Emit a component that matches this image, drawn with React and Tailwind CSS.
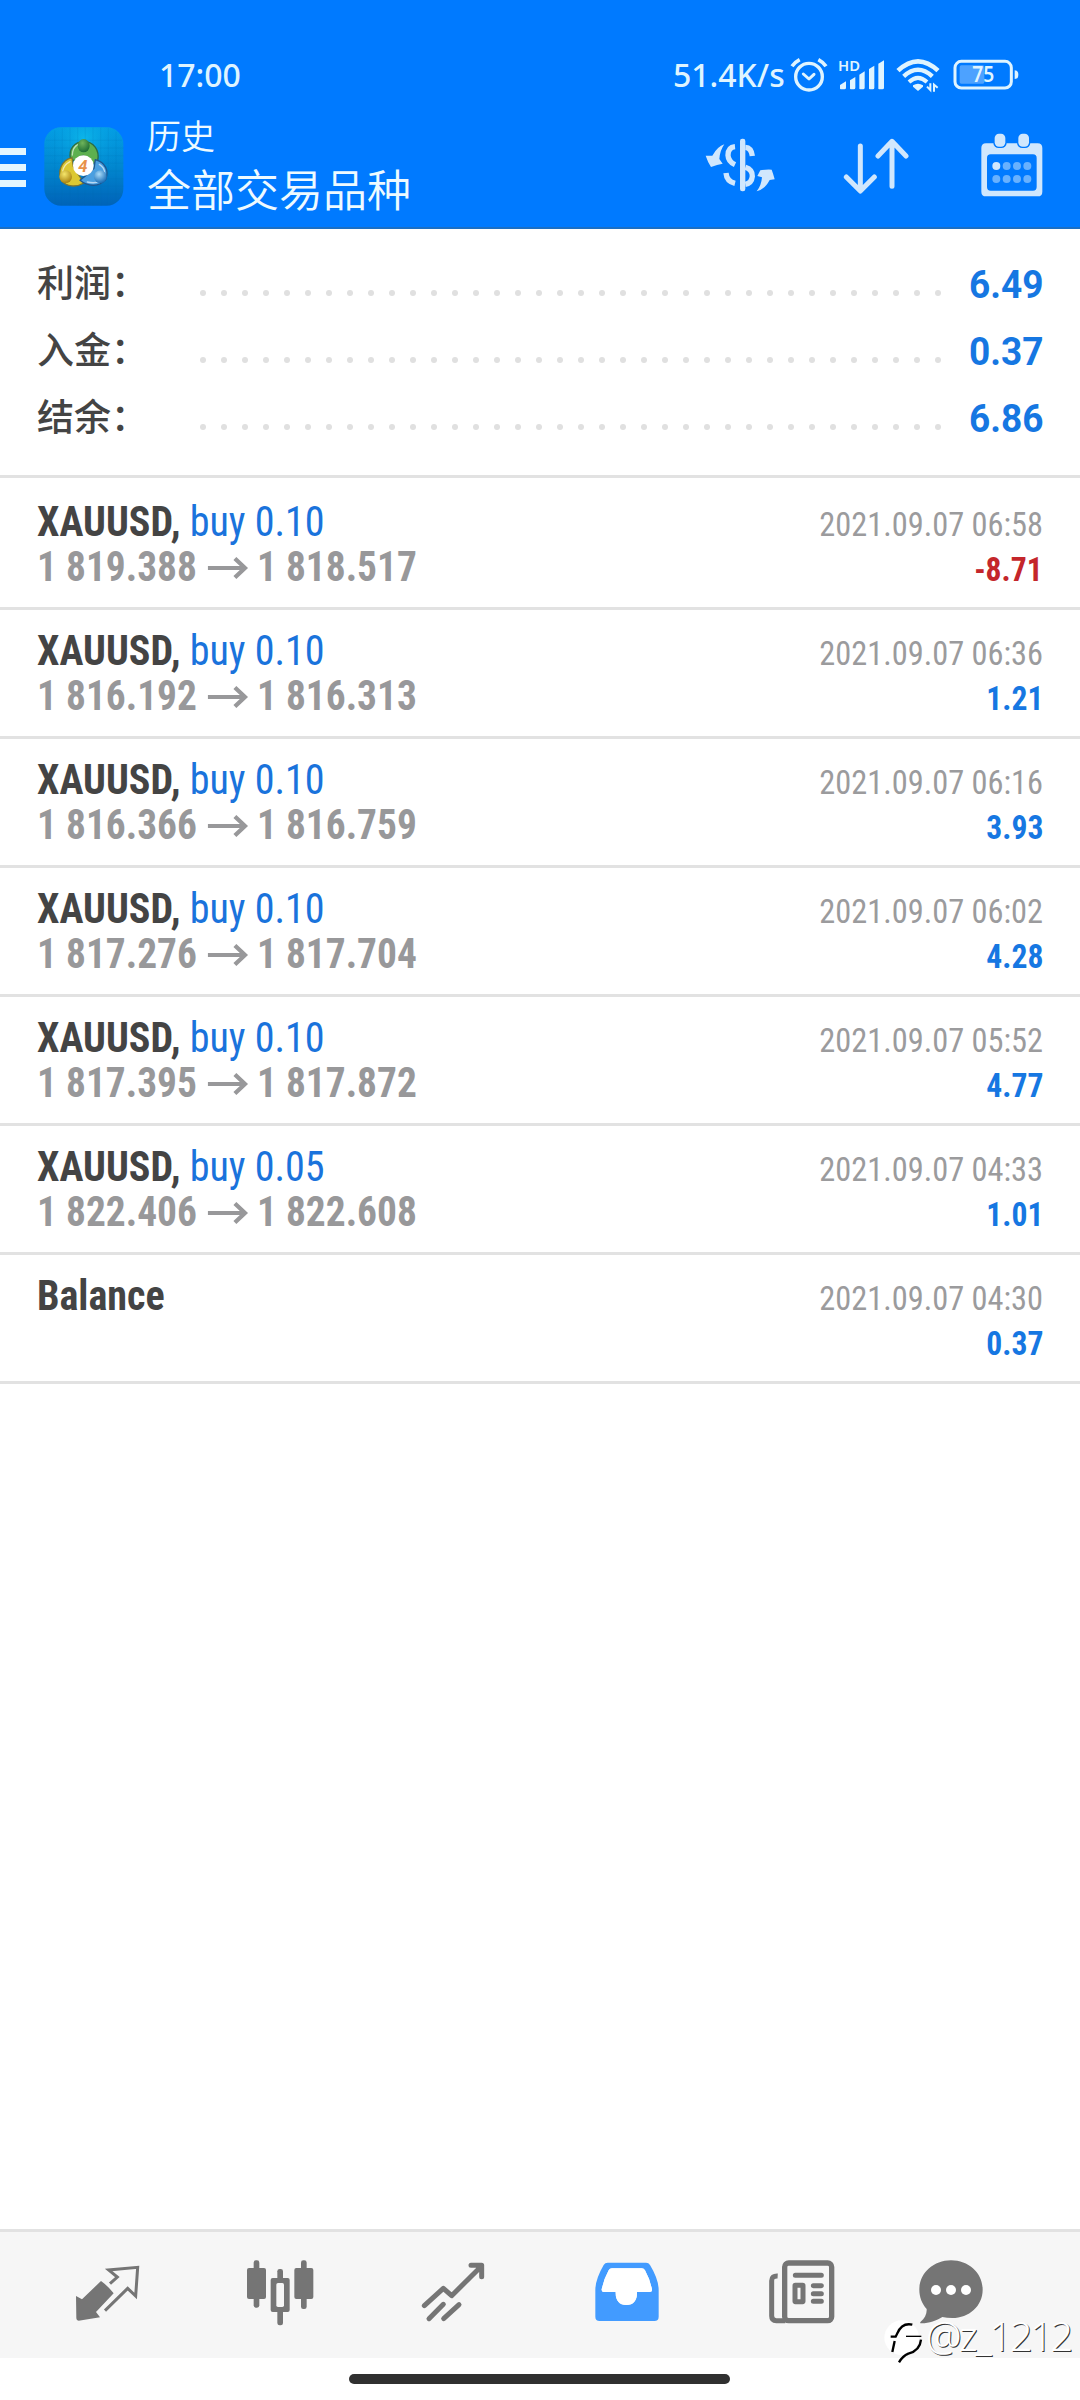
import React from "react";

const summary = [
  ["利润：", "6.49"],
  ["入金：", "0.37"],
  ["结余：", "6.86"],
];

const deals = [
  { lot: "buy 0.10", from: "1 819.388", to: "1 818.517", time: "2021.09.07 06:58", profit: "-8.71" },
  { lot: "buy 0.10", from: "1 816.192", to: "1 816.313", time: "2021.09.07 06:36", profit: "1.21" },
  { lot: "buy 0.10", from: "1 816.366", to: "1 816.759", time: "2021.09.07 06:16", profit: "3.93" },
  { lot: "buy 0.10", from: "1 817.276", to: "1 817.704", time: "2021.09.07 06:02", profit: "4.28" },
  { lot: "buy 0.10", from: "1 817.395", to: "1 817.872", time: "2021.09.07 05:52", profit: "4.77" },
  { lot: "buy 0.05", from: "1 822.406", to: "1 822.608", time: "2021.09.07 04:33", profit: "1.01" },
  { balance: true, time: "2021.09.07 04:30", profit: "0.37" },
];

const dots = Array.from({ length: 36 }, (_, i) => i);

function StatusBar() {
  return (
    <div className="flex h-[109px] items-start pt-[50px] pr-[60px] pl-[159px] text-[#dff4ff]">
      <span className="h-[50px] font-['Noto_Sans',sans-serif] text-[32px] leading-[49px] font-medium whitespace-nowrap">
        17:00
      </span>
      <div className="ml-auto flex h-[49px] items-center">
        <span className="mr-[5px] w-[112px] font-['Noto_Sans',sans-serif] text-[32px] leading-[49px] font-medium whitespace-nowrap">
          51.4K/s
        </span>
        {/* alarm */}
        <svg className="mr-[10px] h-[36px] w-[38px]" viewBox="450 48 114 108" fill="none" stroke="currentColor" strokeLinecap="round" strokeLinejoin="round">
          <circle cx="507" cy="107" r="40" strokeWidth="10" />
          <path d="M490 99L507 114L522 100" strokeWidth="9" />
          <path d="M456 76Q464 64 479 56M535 56Q550 64 558 76" strokeWidth="11" strokeLinecap="butt" />
        </svg>
        {/* signal */}
        <svg className="mr-[11px] h-[34px] w-[47px] overflow-visible" viewBox="594 54 141 102" fill="currentColor">
          <text x="594" y="93" fontSize="42" fontWeight="600" fontFamily="Noto Sans, sans-serif" textLength="66" lengthAdjust="spacingAndGlyphs">HD</text>
          <path d="M600 146V135L618 124V143Q618 148 613 148H602Z" />
          <path d="M630 146V121L646 111V143Q646 148 641 148H632Z" />
          <path d="M658 146V104L674 94V143Q674 148 669 148H660Z" />
          <path d="M687 146V87L703 77V143Q703 148 698 148H689Z" />
          <path d="M715 146V71L732 61V143Q732 148 727 148H717Z" />
        </svg>
        {/* wifi */}
        <svg className="mr-[13px] h-[36px] w-[44px]" viewBox="767 51 132 108" fill="none" stroke="currentColor">
          <path d="M773 92Q833 36 893 92" strokeWidth="14" />
          <path d="M790 109Q833 69 876 109" strokeWidth="13" />
          <path d="M806 126Q833 101 860 126" strokeWidth="12" />
          <path d="M818 136Q833 126 848 136V140L833 153L818 140Z" fill="currentColor" stroke="none" />
          <path d="M870 130V150L860 140M881 155V134L892 143" strokeWidth="6" />
        </svg>
        {/* battery */}
        <svg className="h-[31px] w-[67px]" viewBox="939 57 201 93" fill="none">
          <rect x="959" y="76" width="74" height="55" rx="5" fill="#fff" fillOpacity=".3" />
          <rect x="945" y="64" width="169" height="80" rx="19" stroke="currentColor" strokeWidth="9" />
          <path d="M1124 91Q1135 91 1135 104Q1135 117 1124 117Z" fill="currentColor" />
          <text x="997" y="126" fontSize="62" fontWeight="600" fontFamily="Noto Sans, sans-serif" fill="currentColor" textLength="66" lengthAdjust="spacingAndGlyphs">75</text>
        </svg>
      </div>
    </div>
  );
}

function AppLogo() {
  return (
    <svg className="h-[79px] w-[80px]" viewBox="134 260 240 237">
      <defs>
        <linearGradient id="tile" x1="0" y1="0" x2="0" y2="1">
          <stop offset="0" stopColor="#03a0e6" />
          <stop offset=".5" stopColor="#0187cf" />
          <stop offset="1" stopColor="#0063b8" />
        </linearGradient>
        <radialGradient id="glow" cx=".5" cy=".15" r=".55">
          <stop offset="0" stopColor="#10c3ef" stopOpacity=".7" />
          <stop offset="1" stopColor="#0387d0" stopOpacity="0" />
        </radialGradient>
        <radialGradient id="ballG" cx=".4" cy=".3" r=".7">
          <stop offset="0" stopColor="#6fb45a" />
          <stop offset="1" stopColor="#1f6d34" />
        </radialGradient>
        <radialGradient id="ballY" cx=".4" cy=".3" r=".7">
          <stop offset="0" stopColor="#f5e66b" />
          <stop offset="1" stopColor="#a98412" />
        </radialGradient>
        <radialGradient id="ballB" cx=".4" cy=".3" r=".7">
          <stop offset="0" stopColor="#a9dcfa" />
          <stop offset="1" stopColor="#1c6fb8" />
        </radialGradient>
      </defs>
      <rect x="135" y="261" width="237" height="235" rx="50" fill="url(#tile)" />
      <rect x="135" y="261" width="237" height="235" rx="50" fill="url(#glow)" />
      <path d="M166 270V488M189 264V494M212 262V496M235 262V496M258 262V496M281 262V496M304 262V496M327 264V494M350 274V484M140 300H368M136 323H372M136 346H372M136 369H372M136 392H372M136 415H372M136 438H372M140 461H368" stroke="#0a6fb8" strokeOpacity=".3" strokeWidth="1.5" fill="none" />
      <g strokeLinejoin="round" strokeWidth="4">
        <path d="M214 356C206 326 226 304 254 303C282 304 302 328 295 362L276 372L252 345L228 362Z" fill="#5db04f" stroke="#2c6b45" />
        <path d="M218 352C186 360 174 392 186 420C202 440 230 442 254 428L238 404L222 378Z" fill="#dcc832" stroke="#7d7430" />
        <path d="M288 358C318 366 330 392 319 418C300 440 266 440 242 420L262 404L284 384Z" fill="#4a9fe0" stroke="#1f578f" />
      </g>
      <g fill="none" stroke="#fff" strokeOpacity=".6" strokeWidth="4" strokeLinecap="round">
        <path d="M219 344Q220 320 236 313" />
        <path d="M212 364Q192 374 190 394" />
        <path d="M300 372Q316 382 316 398" />
        <path d="M264 425Q284 430 300 424" />
      </g>
      <ellipse cx="253" cy="316" rx="18" ry="20" fill="url(#ballG)" />
      <circle cx="199" cy="409" r="19" fill="url(#ballY)" />
      <circle cx="303" cy="409" r="19" fill="url(#ballB)" />
      <circle cx="252" cy="376" r="31" fill="#fff" />
      <text x="251" y="394" textAnchor="middle" fontSize="50" fontWeight="700" fontStyle="italic" fontFamily="Roboto, sans-serif" fill="#e8924a">4</text>
    </svg>
  );
}

function Toolbar() {
  return (
    <div className="flex h-[118px] items-start text-[#d0e7fd]">
      <div className="mt-[39px] flex w-[26px] flex-col gap-[9px]">
        <div className="h-[7px] bg-[#e3f6ff]" />
        <div className="h-[7px] bg-[#e3f6ff]" />
        <div className="h-[7px] bg-[#e3f6ff]" />
      </div>
      <div className="mt-[18px] ml-[18px]">
        <AppLogo />
      </div>
      <div className="ml-[23px] flex flex-col font-['Noto_Sans_CJK_SC',sans-serif] font-[350] whitespace-nowrap text-[#eefaff]">
        <span className="h-[50px] text-[34px] leading-[52px]">历史</span>
        <span className="h-[58px] text-[44px] leading-[58px]">全部交易品种</span>
      </div>
      <div className="mt-[24px] mr-[37px] ml-auto flex items-start">
        {/* currency exchange */}
        <svg className="mt-[5px] h-[54px] w-[70px]" viewBox="195 292 210 162" fill="currentColor">
          <rect x="300" y="294" width="16" height="158" rx="7" />
          <g fill="none" stroke="currentColor" strokeWidth="16">
            <path d="M285 318Q264 320 264 344Q265 363 285 372" />
            <path d="M316 320Q334 321 337 346" />
            <path d="M316 380Q338 387 337 407Q335 428 316 431" />
            <path d="M258 397Q260 422 285 428" />
          </g>
          <path d="M253 311Q233 317 217 345L197 345Q204 366 213 379Q232 371 248 369L238 355Q240 329 253 311Z" />
          <path d="M350 452Q374 447 389 418L404 416Q399 397 395 387Q378 386 361 389L352 406L366 410Q364 435 350 452Z" />
        </svg>
        {/* sort arrows */}
        <svg className="mt-[5px] ml-[68px] h-[56px] w-[66px]" viewBox="609 292 198 168" fill="none" stroke="currentColor" strokeWidth="15" strokeLinecap="round" strokeLinejoin="round">
          <path d="M661 316V450M619 409L661 451L703 409" />
          <path d="M756 437V303M714 346L756 302L798 346" />
        </svg>
        {/* calendar */}
        <svg className="ml-[72px] h-[64px] w-[62px]" viewBox="1025 278 186 192" fill="currentColor">
          <path fillRule="evenodd" d="M1040 309H1195Q1209 309 1209 323V454Q1209 468 1195 468H1040Q1026 468 1026 454V323Q1026 309 1040 309ZM1054 342Q1043 342 1043 353V440Q1043 451 1054 451H1181Q1192 451 1192 440V353Q1192 342 1181 342Z" />
          <rect x="1062" y="277" width="40" height="46" rx="16" fill="#007aff" />
          <rect x="1133" y="277" width="40" height="46" rx="16" fill="#007aff" />
          <rect x="1066" y="280" width="32" height="39" rx="13" />
          <rect x="1137" y="280" width="32" height="39" rx="13" />
          <circle cx="1071" cy="377" r="12" />
          <g fillOpacity=".5">
            <circle cx="1102" cy="377" r="12" />
            <circle cx="1133" cy="377" r="12" />
            <circle cx="1164" cy="377" r="12" />
            <circle cx="1071" cy="416" r="12" />
            <circle cx="1102" cy="416" r="12" />
            <circle cx="1133" cy="416" r="12" />
            <circle cx="1164" cy="416" r="12" />
          </g>
        </svg>
      </div>
    </div>
  );
}

function SummaryRow({ label, value }) {
  return (
    <div className="flex h-[67px] items-center">
      <span className="w-[163px] pb-[4px] font-['Noto_Sans_CJK_SC',sans-serif] text-[37px] leading-[63px] font-medium whitespace-nowrap text-[#444]">
        {label}
      </span>
      <div className="mt-[18px] flex w-[741px] justify-between">
        {dots.map((d) => (
          <span key={d} className="size-[6px] rounded-full bg-[#e0e0e0]" />
        ))}
      </div>
      <span className="ml-auto origin-right scale-x-[0.975] pt-[3px] font-['Roboto',sans-serif] text-[38px] leading-[64px] font-bold whitespace-nowrap text-[#1677e2]">
        {value}
      </span>
    </div>
  );
}

function PriceArrow() {
  return (
    <svg className="mr-[8px] ml-[12px] mt-[3px] h-[22px] w-[44px]" viewBox="0 0 41 22" preserveAspectRatio="none" fill="none" stroke="currentColor" strokeWidth="4.2">
      <path d="M0 11H38M27 1.5L37 11L27 20.5" />
    </svg>
  );
}

function DealRow({ deal, first }) {
  const color = deal.profit.startsWith("-") ? "text-[#c4262b]" : "text-[#1677e2]";
  return (
    <div className={`${first ? "h-[132px] pt-[21px]" : "h-[129px] pt-[18px]"} flex justify-between border-b-[3px] border-[#e2e2e2] px-[37px] font-['Roboto_Condensed','Roboto',sans-serif]`}>
      <div className="flex flex-col items-start">
        <div className="h-[45px] origin-left scale-x-[0.954] text-[42px] leading-[45px] whitespace-nowrap">
          <span className="font-bold text-[#444]">{deal.balance ? "Balance" : "XAUUSD, "}</span>
          <span className="text-[#1a73dc]">{deal.lot}</span>
        </div>
        {!deal.balance && (
          <div className="flex h-[45px] origin-left scale-x-[0.938] items-center text-[42px] leading-[45px] font-bold whitespace-nowrap text-[#98989a]">
            <span>{deal.from}</span>
            <PriceArrow />
            <span>{deal.to}</span>
          </div>
        )}
      </div>
      <div className="flex flex-col items-end pt-[3px] whitespace-nowrap">
        <span className="h-[45px] origin-right scale-x-[0.952] text-[34px] leading-[45px] text-[#9b9b9d]">{deal.time}</span>
        <span className={`${color} h-[45px] origin-right scale-x-[0.93] text-[34px] leading-[45px] font-bold`}>{deal.profit}</span>
      </div>
    </div>
  );
}

function BottomNav() {
  return (
    <nav className="flex h-[129px] items-start border-t-[3px] border-[#e2e2e2] bg-[#f6f6f6] pt-[28px] text-[#757575]">
      {/* quotes */}
      <svg className="ml-[75px] h-[66px] w-[65px]" viewBox="225 150 195 198" fill="currentColor">
        <path d="M228 258L246 268L303 213Q322 226 341 250L288 306L300 322L236 332Q229 332 229 325Z" />
        <path d="M330 221L352 201L326 180L413 172L407 258L383 235L315 302" fill="none" stroke="currentColor" strokeWidth="9" />
      </svg>
      {/* chart */}
      <svg className="ml-[106px] h-[66px] w-[68px]" viewBox="738 150 204 198" fill="currentColor">
        <rect x="761" y="151" width="17" height="142" rx="7" />
        <rect x="741" y="174" width="57" height="93" rx="6" />
        <rect x="903" y="151" width="17" height="146" rx="7" />
        <rect x="883" y="174" width="57" height="93" rx="6" />
        <rect x="832" y="177" width="17" height="169" rx="7" />
        <rect x="812" y="204" width="57" height="102" rx="6" />
        <rect x="829" y="219" width="23" height="72" rx="5" fill="#f6f6f6" />
      </svg>
      {/* trade */}
      <svg className="ml-[107px] h-[66px] w-[64px]" viewBox="183 150 192 198" fill="none" stroke="currentColor" strokeWidth="15" strokeLinecap="round" strokeLinejoin="round">
        <path d="M193 287L250 235L275 257L364 169M333 166H365V200" />
        <path d="M207 326L250 283" />
        <path d="M251 326L297 284" />
        <path d="M345 166H366V188Z" fill="currentColor" strokeWidth="2" />
      </svg>
      {/* history */}
      <svg className="ml-[109px] h-[66px] w-[65px]" viewBox="703 150 195 198" fill="#429bff">
        <path fillRule="evenodd" d="M744 158H859Q867 158 871 165Q897 208 897 240V320Q897 333 884 333H720Q707 333 707 320V240Q707 208 732 165Q736 158 744 158ZM757 175Q750 175 747 181Q733 206 726 238Q725 246 733 246H768Q767 284 800 285Q833 284 832 246H870Q878 246 877 238Q871 208 856 181Q853 175 846 175Z" />
        <path d="M757 175Q750 175 747 181Q733 206 726 238Q725 246 733 246H768Q767 284 800 285Q833 284 832 246H870Q878 246 877 238Q871 208 856 181Q853 175 846 175Z" fill="#fff" />
      </svg>
      {/* news */}
      <svg className="ml-[109px] h-[66px] w-[68px]" viewBox="144 150 204 198" fill="none" stroke="currentColor">
        <rect x="194" y="159" width="141" height="173" rx="12" strokeWidth="16" />
        <path d="M173 198Q155 197 155 212V318Q155 332 169 332H196" strokeWidth="15" />
        <path d="M226 196H304M280 227H304M280 251H304M280 274H304" strokeWidth="15" strokeLinecap="round" />
        <rect x="225" y="226" width="24" height="49" rx="1" strokeWidth="15" strokeLinejoin="round" />
      </svg>
      {/* messages */}
      <svg className="ml-[82px] h-[66px] w-[66px]" viewBox="594 150 198 198" fill="currentColor">
        <path d="M693 151C747 151 788 190 788 239C788 288 747 324 697 324C686 324 676 323 667 321C649 332 625 341 602 340C600 339 600 337 602 335C614 325 621 312 620 297C606 281 598 261 598 239C598 190 640 151 693 151Z" />
        <circle cx="648" cy="240" r="15" fill="#fff" />
        <circle cx="693" cy="240" r="15" fill="#fff" />
        <circle cx="738" cy="240" r="15" fill="#fff" />
      </svg>
    </nav>
  );
}

function Watermark() {
  return (
    <div className="absolute top-[2313px] left-[884px] flex h-[54px] items-start">
      <svg className="mt-[7px] h-[45px] w-[42px]" viewBox="492 330 126 135">
        <circle cx="545" cy="383" r="52" fill="#fff" />
        <g fill="none" stroke="#000" strokeWidth="7">
          <path d="M577 344Q546 337 532 370L527 380H512" />
          <path d="M558 379H604" strokeWidth="4" />
          <path d="M524 393L517 426" />
          <path d="M603 389Q600 422 565 431Q548 438 537 457" />
        </g>
      </svg>
      <span className="font-['Noto_Sans',sans-serif] text-[40px] leading-[46px] font-light tracking-[-2.5px] whitespace-nowrap text-white [text-shadow:1px_1px_0_#333]">
        @z_1212
      </span>
    </div>
  );
}

export default function App() {
  return (
    <div className="relative flex h-[2400px] w-[1080px] flex-col overflow-hidden bg-white">
      <header className="h-[229px] border-b-2 border-[#1b6fc4] bg-[#007aff]">
        <StatusBar />
        <Toolbar />
      </header>
      <section className="h-[249px] border-b-[3px] border-[#e2e2e2] px-[37px] pt-[21px]">
        {summary.map(([label, value]) => (
          <SummaryRow key={label} label={label} value={value} />
        ))}
      </section>
      <main className="flex-1">
        {deals.map((deal, i) => (
          <DealRow key={deal.time} deal={deal} first={i === 0} />
        ))}
      </main>
      <BottomNav />
      <footer className="flex h-[42px] pt-[16px] pl-[349px]">
        <div className="h-[10px] w-[381px] rounded-full bg-[#303030]" />
      </footer>
      <Watermark />
    </div>
  );
}
